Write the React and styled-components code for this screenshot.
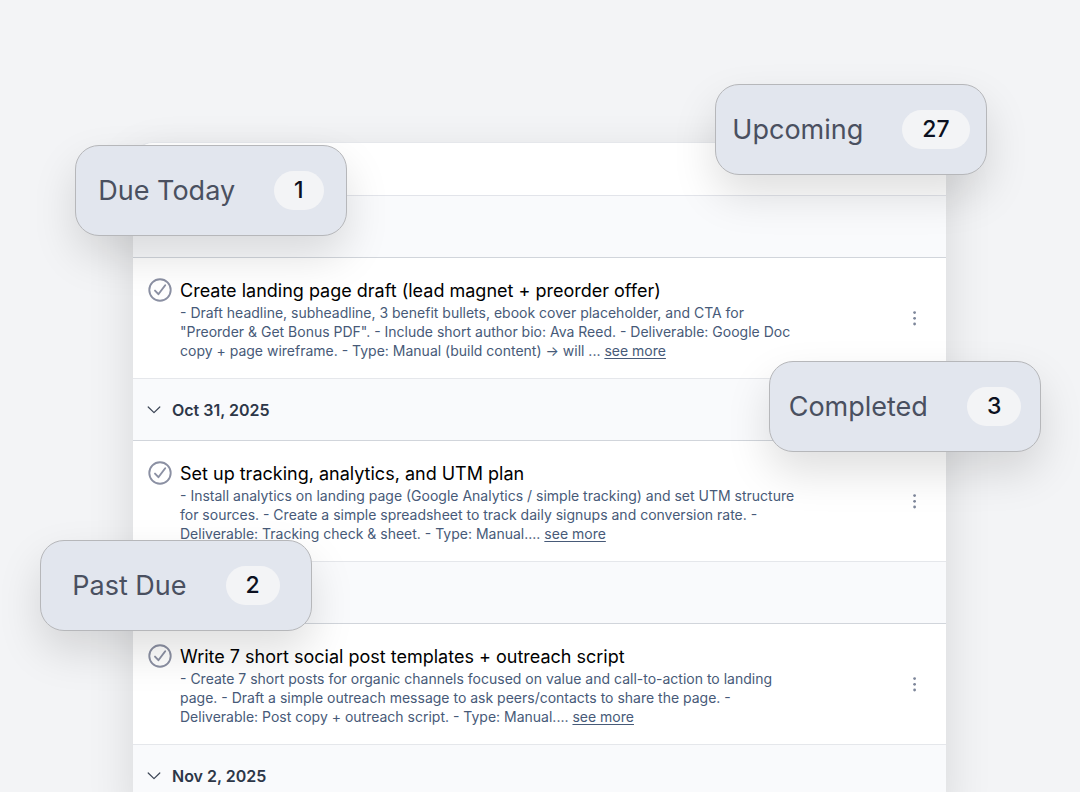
import React from 'react';
import styled, { createGlobalStyle } from 'styled-components';

const GlobalStyle = createGlobalStyle`
  * {
    box-sizing: border-box;
  }

  body {
    margin: 0;
    background: #f3f4f6;
    font-family: Inter, "Liberation Sans", sans-serif;
  }

  button {
    padding: 0;
    border: 0;
    background: none;
    font: inherit;
    color: inherit;
    cursor: pointer;
  }
`

const Page = styled.main`
  position: relative;
  height: 100vh;
  padding: 142px 134px 0 133px;
  overflow: hidden;
`

const Panel = styled.section`
  background: #fff;
  border-top: 1px solid #e5e7eb;
  border-radius: 20px 0 0 0;
  box-shadow: 0 16px 48px rgba(0, 0, 0, 0.12);
`

const PanelHead = styled.div`
  height: 53px;
  border-bottom: 1px solid #e2e4ea;
`

const GroupHead = styled.h2`
  display: flex;
  align-items: center;
  height: 62px;
  margin: 0;
  padding: 0 14px;
  background: #f9fafc;
  border-bottom: 1px solid #d1d5db;
  font-size: 16px;
  font-weight: 600;
  color: #2d3748;
`

const GroupButton = styled.button`
  display: flex;
  align-items: center;
  gap: 11px;
`

const Task = styled.article`
  display: flex;
  align-items: flex-start;
  gap: 8px;
  padding: 20px 23px 18px 15px;
  border-bottom: 1px solid #e5e7eb;
`

const TaskBody = styled.div`
  flex: 1;
`

const Title = styled.h3`
  margin: 0;
  font-size: 18px;
  line-height: 25px;
  font-weight: 400;
  color: #000;
`

const Text = styled.p`
  max-width: 616px;
  margin: 0;
  font-size: 14px;
  line-height: 19px;
  color: #475a78;
`

const More = styled.a`
  color: inherit;
  text-decoration: underline;
  text-underline-offset: 2px;
`

const CheckButton = styled.button`
  display: flex;
`

const MenuButton = styled.button`
  display: flex;
  align-self: center;
`

const Badge = styled.button`
  position: absolute;
  top: ${props => props.$top}px;
  left: ${props => props.$left};
  right: ${props => props.$right};
  display: flex;
  align-items: center;
  justify-content: center;
  gap: 39px;
  width: 272px;
  height: 91px;
  border: 1px solid #b6b7ba;
  border-radius: 24px;
  background: #e2e6ee;
  box-shadow: 0 20px 44px rgba(0, 0, 0, 0.13);
  font-size: 27px;
  color: #4a5060;
`

const Count = styled.span`
  padding: 0 20px;
  border-radius: 20px;
  background: #f3f4f6;
  font-size: 23px;
  line-height: 39px;
  font-weight: 500;
  color: #0b1020;
`

const badges = [
  { label: 'Due Today', count: 1, top: 145, left: '75px' },
  { label: 'Upcoming', count: 27, top: 84, right: '93px' },
  { label: 'Completed', count: 3, top: 361, right: '39px' },
  { label: 'Past Due', count: 2, top: 540, left: '40px' },
];

const groups = [
  {
    id: 'first',
    title: 'Create landing page draft (lead magnet + preorder offer)',
    text: '- Draft headline, subheadline, 3 benefit bullets, ebook cover placeholder, and CTA for "Preorder & Get Bonus PDF". - Include short author bio: Ava Reed. - Deliverable: Google Doc copy + page wireframe. - Type: Manual (build content) → will ...',
  },
  {
    id: 'oct31',
    date: 'Oct 31, 2025',
    title: 'Set up tracking, analytics, and UTM plan',
    text: '- Install analytics on landing page (Google Analytics / simple tracking) and set UTM structure for sources. - Create a simple spreadsheet to track daily signups and conversion rate. - Deliverable: Tracking check & sheet. - Type: Manual....',
  },
  {
    id: 'nov1',
    title: 'Write 7 short social post templates + outreach script',
    text: '- Create 7 short posts for organic channels focused on value and call-to-action to landing page. - Draft a simple outreach message to ask peers/contacts to share the page. - Deliverable: Post copy + outreach script. - Type: Manual....',
  },
  { id: 'nov2', date: 'Nov 2, 2025' },
];

const CheckIcon = () => (
  <svg width="24" height="24" viewBox="0 0 24 24" fill="none" stroke="#8b90a3" strokeWidth="1.9" strokeLinecap="round" strokeLinejoin="round">
    <circle cx="12" cy="12" r="10.7" />
    <path d="M7 12.6L10.4 16.2L17.2 7.2" />
  </svg>
)

const ChevronIcon = () => (
  <svg width="14" height="14" viewBox="0 0 14 14" fill="none" stroke="#3b4455" strokeWidth="1.2" strokeLinecap="round" strokeLinejoin="round">
    <path d="M1.2 4L7 9.6L12.8 4" />
  </svg>
)

const DotsIcon = () => (
  <svg width="16" height="16" viewBox="0 0 16 16" fill="#7d869a">
    <circle cx="7.6" cy="1.6" r="1.4" />
    <circle cx="7.6" cy="7.3" r="1.4" />
    <circle cx="7.6" cy="13" r="1.4" />
  </svg>
)

const Group = function(props){
  const { date, title, text } = props.group;
  return (
    <>
      <GroupHead>
        {date && <GroupButton type="button"><ChevronIcon />{date}</GroupButton>}
      </GroupHead>
      {title && (
        <Task>
          <CheckButton type="button" aria-label="Mark as done"><CheckIcon /></CheckButton>
          <TaskBody>
            <Title>{title}</Title>
            <Text>{text} <More href="#">see more</More></Text>
          </TaskBody>
          <MenuButton type="button" aria-label="Task menu"><DotsIcon /></MenuButton>
        </Task>
      )}
    </>
  )
}

const App = function(){
  return (
    <Page>
      <GlobalStyle />
      <Panel>
        <PanelHead />
        {groups.map(group => <Group key={group.id} group={group} />)}
      </Panel>
      {badges.map(badge => (
        <Badge key={badge.label} type="button" $top={badge.top} $left={badge.left} $right={badge.right}>
          {badge.label}
          <Count>{badge.count}</Count>
        </Badge>
      ))}
    </Page>
  )
}

export default App;
